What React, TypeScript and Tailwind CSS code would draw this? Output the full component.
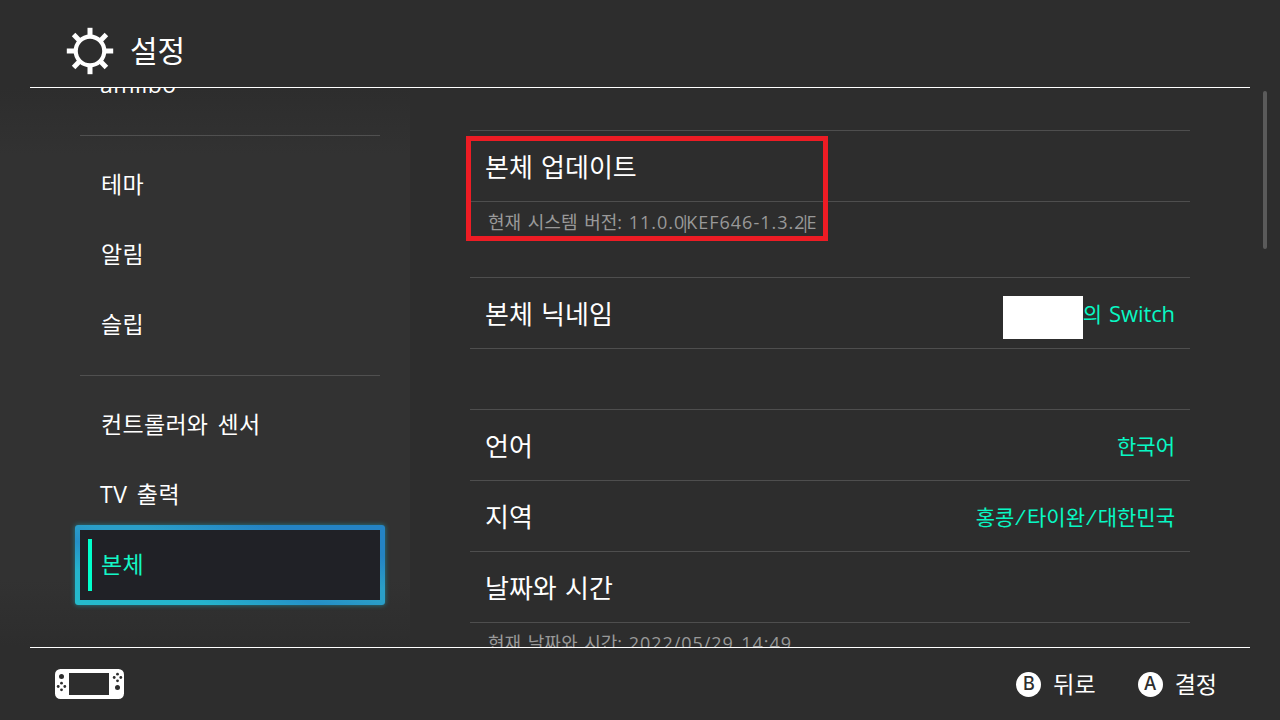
import clsx from 'clsx';
import type { ReactNode } from 'react';

interface SettingRowProps {
  label: string;
  value?: ReactNode;
  masked?: boolean;
  first?: boolean;
}

const menuGroups = [
  ['amiibo'],
  ['테마', '알림', '슬립'],
  ['컨트롤러와 센서', 'TV 출력', '본체'],
];

const selectedItem = '본체';

function GearIcon() {
  return (
    <svg className="w-12 h-12" viewBox="0 0 48 48" fill="none" stroke="white">
      <circle cx="24" cy="24" r="14.3" strokeWidth="4.2" />
      {[0, 45, 90, 135, 180, 225, 270, 315].map((angle) => (
        <path key={angle} d="M24 0.8V9" strokeWidth="5" transform={`rotate(${angle} 24 24)`} />
      ))}
    </svg>
  );
}

function ConsoleIcon() {
  return (
    <svg className="w-[70px] h-[30px]" viewBox="0 0 70 30">
      <rect width="69" height="30" rx="5.5" fill="white" />
      <g fill="#2d2d2d">
        <rect x="14" y="4" width="40" height="22" />
        <circle cx="6.5" cy="7.5" r="2.5" />
        <circle cx="62.5" cy="18.5" r="2.5" />
        <circle cx="6.5" cy="14.2" r="1.4" />
        <circle cx="6.5" cy="20.8" r="1.4" />
        <circle cx="3.2" cy="17.5" r="1.4" />
        <circle cx="9.8" cy="17.5" r="1.4" />
        <circle cx="62.5" cy="5.2" r="1.4" />
        <circle cx="62.5" cy="11.8" r="1.4" />
        <circle cx="59.2" cy="8.5" r="1.4" />
        <circle cx="65.8" cy="8.5" r="1.4" />
      </g>
    </svg>
  );
}

function MenuItem({ label }: { label: string }) {
  const selected = label === selectedItem;
  const latin = /^[A-Za-z]/.test(label);

  return (
    <div className="relative h-[70px]">
      {selected && (
        <div className="absolute -inset-[5px] rounded-[3px] p-[5px] bg-[linear-gradient(to_top_right,#25bccc_0%,#25b4cc_22%,#2590c8_40%,#2a9fc8_52%,#2a9fc8_60%,#2484c4_80%,#2484c4_100%)] shadow-[0_0_5px_#23808f]">
          <div className="h-full bg-[#202126] pl-2 py-[9px]">
            <div className="w-1 h-full bg-[#00ffcc]" />
          </div>
        </div>
      )}
      <div
        className={clsx(
          'relative h-full flex items-center pb-0.5 text-[23px] whitespace-nowrap [word-spacing:3px]',
          latin ? 'pl-5 tracking-[0.5px]' : 'pl-[21px] tracking-[0.3px]',
          selected ? 'text-[#14f7c6]' : 'text-white'
        )}
      >
        {label}
      </div>
    </div>
  );
}

function SettingRow({ label, value, masked, first }: SettingRowProps) {
  return (
    <div
      className={clsx(
        'flex items-center justify-between border-b border-[#4e4e4e] px-[15px] whitespace-nowrap',
        first ? 'h-[72px] border-t' : 'h-[71px]'
      )}
    >
      <span className="pt-0.5 text-[26px] [word-spacing:1.5px] text-white">{label}</span>
      {value && (
        <span className="flex items-center pt-0.5 text-[21px] text-[#08f8c4]">
          {masked && <span className="w-20 h-[43px] mt-1.5 bg-white" />}
          {value}
        </span>
      )}
    </div>
  );
}

function Slash() {
  return <span className="px-[2.5px] -skew-x-12">/</span>;
}

function Bar() {
  return <span className="-mx-[5px]">|</span>;
}

function ButtonHint({ button, label }: { button: string; label: string }) {
  return (
    <div className="flex items-center gap-3">
      <span className="w-[25px] h-[25px] rounded-full bg-white text-[#2d2d2d] flex items-center justify-center text-[18px] leading-none font-medium font-['Inter',sans-serif]">
        {button}
      </span>
      <span className="text-[23px] text-white">{label}</span>
    </div>
  );
}

export default function App() {
  return (
    <div className="w-[1280px] h-[720px] overflow-hidden bg-[#2d2d2d] flex flex-col leading-none font-[370] font-['Open_Sans','Noto_Sans_CJK_KR',sans-serif]">
      <header className="h-[88px] mx-[30px] pl-9 pt-[15px] flex items-center gap-4 border-b border-white shrink-0">
        <GearIcon />
        <h1 className="text-[30px] font-[370] text-white">설정</h1>
      </header>

      <main className="h-[559px] flex overflow-hidden shrink-0">
        <nav className="w-[410px] pl-20 pr-[30px] overflow-hidden bg-[linear-gradient(to_bottom,#2d2d2d_0%,#323232_12%,#323232_88%,#2d2d2d_100%)]">
          <div className="-mt-[38px]">
            {menuGroups.map((group, index) => (
              <div key={index}>
                {index > 0 && (
                  <div className="h-[30px] pt-[15px]">
                    <div className="h-px bg-[#505050]" />
                  </div>
                )}
                {group.map((label) => (
                  <MenuItem key={label} label={label} />
                ))}
              </div>
            ))}
          </div>
        </nav>

        <section className="w-[780px] pl-[60px] pt-[42px]">
          <div className="relative">
            <SettingRow first label="본체 업데이트" />
            <div className="h-[75px] pl-[18px] pt-[11px] text-[18px] text-[#999999] [word-spacing:2px] whitespace-nowrap">
              현재 시스템 버전:{' '}
              <span className="tracking-[1px]">
                11.0.0
                <Bar />
                KEF646-1.3.2
                <Bar />E
              </span>
            </div>
            {/* highlight around the system update entry */}
            <div className="absolute -left-1 top-1.5 w-[362px] h-[105px] border-5 border-[#ed1c24]" />
          </div>
          <SettingRow
            first
            masked
            label="본체 닉네임"
            value={
              <>
                의<span className="pl-[7px] pb-0.5 text-[22px] tracking-[-0.1px]">Switch</span>
              </>
            }
          />
          <div className="h-[60px]" />
          <SettingRow first label="언어" value="한국어" />
          <SettingRow
            label="지역"
            value={
              <>
                홍콩
                <Slash />
                타이완
                <Slash />
                대한민국
              </>
            }
          />
          <SettingRow label="날짜와 시간" />
          <div className="pl-[18px] pt-[11px] text-[18px] text-[#999999] [word-spacing:2px] whitespace-nowrap">
            현재 날짜와 시간: <span className="tracking-[0.95px]">2022/05/29 14:49</span>
          </div>
        </section>

        <div className="w-[90px] pt-[3px] pl-[73px]">
          <div className="w-1 h-[158px] rounded-full bg-[#5a5a5a]" />
        </div>
      </main>

      <footer className="h-[73px] mx-[30px] pl-[25px] pr-[33px] flex items-center justify-between border-t border-white shrink-0">
        <ConsoleIcon />
        <div className="flex items-center gap-[42px]">
          <ButtonHint button="B" label="뒤로" />
          <ButtonHint button="A" label="결정" />
        </div>
      </footer>
    </div>
  );
}
